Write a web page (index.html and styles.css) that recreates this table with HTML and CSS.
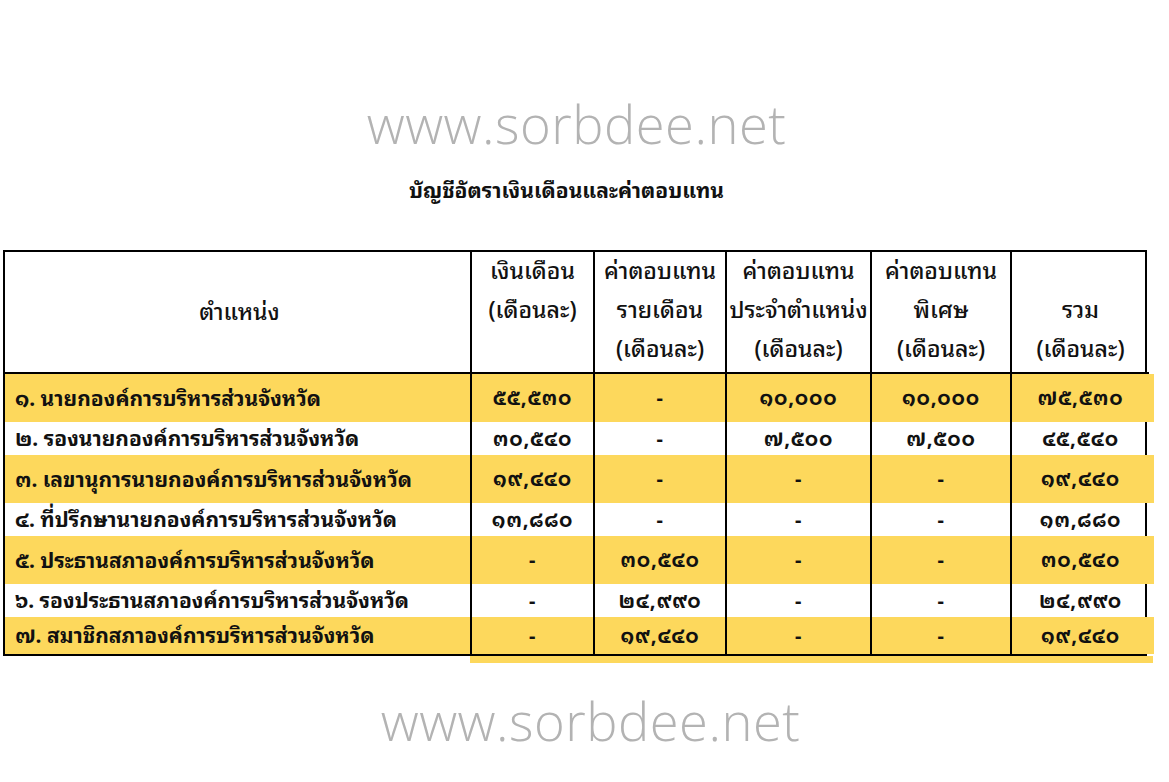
FILE: index.html
```html
<!DOCTYPE html>
<html lang="th">
<head>
<meta charset="utf-8">
<title>บัญชีอัตราเงินเดือนและค่าตอบแทน</title>
<link rel="stylesheet" href="styles.css">
</head>
<body>
<div class="page">
  <div class="watermark wm-top">www.sorbdee.net</div>
  <h1 class="title">บัญชีอัตราเงินเดือนและค่าตอบแทน</h1>
  <div class="sheet">
    <div class="grid">
      <div class="hcell hc-mid"><span>ตำแหน่ง</span></div>
      <div class="hcell"><span>เงินเดือน</span><span>(เดือนละ)</span><span></span></div>
      <div class="hcell"><span>ค่าตอบแทน</span><span>รายเดือน</span><span>(เดือนละ)</span></div>
      <div class="hcell"><span>ค่าตอบแทน</span><span>ประจำตำแหน่ง</span><span>(เดือนละ)</span></div>
      <div class="hcell"><span>ค่าตอบแทน</span><span>พิเศษ</span><span>(เดือนละ)</span></div>
      <div class="hcell hc-last"><span></span><span>รวม</span><span>(เดือนละ)</span></div>

      <div class="row hi tall"><div class="c name">๑. นายกองค์การบริหารส่วนจังหวัด</div><div class="c">๕๕,๕๓๐</div><div class="c">-</div><div class="c">๑๐,๐๐๐</div><div class="c">๑๐,๐๐๐</div><div class="c last">๗๕,๕๓๐</div></div>
      <div class="row"><div class="c name">๒. รองนายกองค์การบริหารส่วนจังหวัด</div><div class="c">๓๐,๕๔๐</div><div class="c">-</div><div class="c">๗,๕๐๐</div><div class="c">๗,๕๐๐</div><div class="c last">๔๕,๕๔๐</div></div>
      <div class="row hi tall"><div class="c name">๓. เลขานุการนายกองค์การบริหารส่วนจังหวัด</div><div class="c">๑๙,๔๔๐</div><div class="c">-</div><div class="c">-</div><div class="c">-</div><div class="c last">๑๙,๔๔๐</div></div>
      <div class="row"><div class="c name">๔. ที่ปรึกษานายกองค์การบริหารส่วนจังหวัด</div><div class="c">๑๓,๘๘๐</div><div class="c">-</div><div class="c">-</div><div class="c">-</div><div class="c last">๑๓,๘๘๐</div></div>
      <div class="row hi tall"><div class="c name">๕. ประธานสภาองค์การบริหารส่วนจังหวัด</div><div class="c">-</div><div class="c">๓๐,๕๔๐</div><div class="c">-</div><div class="c">-</div><div class="c last">๓๐,๕๔๐</div></div>
      <div class="row"><div class="c name">๖. รองประธานสภาองค์การบริหารส่วนจังหวัด</div><div class="c">-</div><div class="c">๒๔,๙๙๐</div><div class="c">-</div><div class="c">-</div><div class="c last">๒๔,๙๙๐</div></div>
      <div class="row hi endrow"><div class="c name">๗. สมาชิกสภาองค์การบริหารส่วนจังหวัด</div><div class="c">-</div><div class="c">๑๙,๔๔๐</div><div class="c">-</div><div class="c">-</div><div class="c last">๑๙,๔๔๐</div></div>
    </div>
    <div class="tail"></div>
  </div>
  <div class="watermark wm-bottom">www.sorbdee.net</div>
</div>
</body>
</html>
```
FILE: styles.css
```css
html, body {
  margin: 0;
  padding: 0;
  background: #ffffff;
}
body {
  width: 1169px;
  height: 782px;
  overflow: hidden;
  font-family: "Tahoma", "Noto Sans Thai Looped", "Loma", "Garuda", "Waree", "Noto Sans Thai", "Noto Sans", sans-serif;
  color: #111;
}
.page {
  display: flex;
  flex-direction: column;
}
.watermark {
  font-family: "Open Sans", "Lato", sans-serif;
  font-weight: 300;
  color: #b3b3b3;
  text-align: center;
  font-size: 52.5px;
  line-height: 60px;
  letter-spacing: 0.5px;
}
.wm-top {
  margin-top: 94px;
  padding-right: 16px;
}
.wm-bottom {
  margin-top: 28px;
  padding-left: 12px;
}
.title {
  margin: 17px 0 0 0;
  font-size: 21px;
  font-weight: bold;
  line-height: 36px;
  text-align: center;
  padding-right: 36px;
}
.sheet {
  margin-top: 43px;
  margin-left: 3px;
  width: 1147px;
}
.grid {
  display: grid;
  grid-template-columns: 467px 123px 132px 145px 140px 137px;
  border: 2px solid #000;
  width: 1140px;
}
.hcell {
  height: 120px;
  display: flex;
  flex-direction: column;
  justify-content: flex-start;
  align-items: center;
  border-right: 2px solid #000;
  border-bottom: 2px solid #000;
  font-size: 23px;
  font-weight: 500;
}
.hcell span {
  height: 39px;
  line-height: 34px;
  white-space: nowrap;
}
.hc-mid {
  justify-content: center;
  padding-left: 4px;
}
.hc-last {
  border-right: none;
}
.row {
  display: contents;
}
.c {
  height: 33px;
  box-sizing: border-box;
  padding-bottom: 4px;
  display: flex;
  align-items: center;
  justify-content: center;
  border-right: 2px solid #000;
  font-size: 20px;
  font-weight: bold;
  letter-spacing: 0.8px;
}
.c.name {
  justify-content: flex-start;
  padding-left: 10px;
  font-size: 21px;
  letter-spacing: 0;
}
.c.last {
  border-right: none;
}
.row.hi .c {
  background: #fdd85c;
}
.row.hi .c.last {
  box-shadow: 5px 0 0 #fdd85c;
}
.row.tall .c {
  height: 48px;
}
.row.endrow .c {
  height: 37px;
}
.tail {
  margin-left: 467px;
  width: 683px;
  height: 7px;
  background: #fdd85c;
}
```
